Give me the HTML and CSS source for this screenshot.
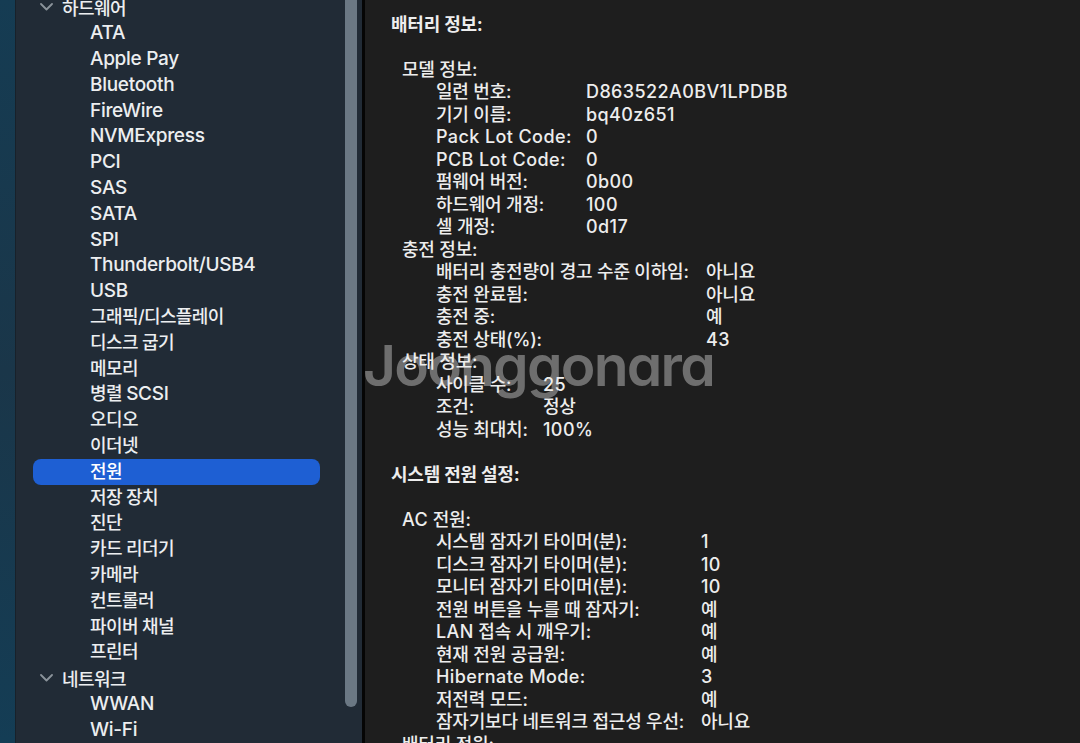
FILE: index.html
```html
<!DOCTYPE html>
<html lang="ko">
<head>
  <meta charset="UTF-8" />
  <title>시스템 정보 - 전원</title>
  <meta name="viewport" content="width=device-width, initial-scale=1.0"/>
  <link rel="stylesheet" href="styles.css">
</head>
<body>

  <div class="window">

    <!-- sidebar with the hardware tree -->
    <aside class="sidebar">
      <div class="edge"></div>
      <div class="tree">
        <div class="group-head">
          <svg class="chevron" width="13" height="8" viewBox="0 0 13 8"><polyline points="1,1 6.5,6.5 12,1" /></svg>
          <span>하드웨어</span>
        </div>
        <div class="item en">ATA</div>
        <div class="item en">Apple Pay</div>
        <div class="item en">Bluetooth</div>
        <div class="item en">FireWire</div>
        <div class="item en">NVMExpress</div>
        <div class="item en">PCI</div>
        <div class="item en">SAS</div>
        <div class="item en">SATA</div>
        <div class="item en">SPI</div>
        <div class="item en">Thunderbolt/USB4</div>
        <div class="item en">USB</div>
        <div class="item">그래픽/디스플레이</div>
        <div class="item">디스크 굽기</div>
        <div class="item">메모리</div>
        <div class="item">병렬 <span class="en">SCSI</span></div>
        <div class="item">오디오</div>
        <div class="item">이더넷</div>
        <div class="item selected">전원</div>
        <div class="item">저장 장치</div>
        <div class="item">진단</div>
        <div class="item">카드 리더기</div>
        <div class="item">카메라</div>
        <div class="item">컨트롤러</div>
        <div class="item">파이버 채널</div>
        <div class="item">프린터</div>
        <div class="group-head">
          <svg class="chevron" width="13" height="8" viewBox="0 0 13 8"><polyline points="1,1 6.5,6.5 12,1" /></svg>
          <span>네트워크</span>
        </div>
        <div class="item en">WWAN</div>
        <div class="item en">Wi-Fi</div>
      </div>
      <div class="scrollbar"></div>
    </aside>

    <div class="divider"></div>

    <!-- power report -->
    <main class="content">
      <div class="watermark">Joonggonara</div>

      <div class="report">
        <div class="head">배터리 정보:</div>
        <div class="blank"></div>

        <div class="sub">모델 정보:</div>
        <div class="rows model">
          <span>일련 번호:</span><span class="en">D863522A0BV1LPDBB</span>
          <span>기기 이름:</span><span class="en">bq40z651</span>
          <span class="en">Pack Lot Code:</span><span class="en">0</span>
          <span class="en">PCB Lot Code:</span><span class="en">0</span>
          <span>펌웨어 버전:</span><span class="en">0b00</span>
          <span>하드웨어 개정:</span><span class="en">100</span>
          <span>셀 개정:</span><span class="en">0d17</span>
        </div>

        <div class="sub">충전 정보:</div>
        <div class="rows charge">
          <span>배터리 충전량이 경고 수준 이하임:</span><span>아니요</span>
          <span>충전 완료됨:</span><span>아니요</span>
          <span>충전 중:</span><span>예</span>
          <span>충전 상태(%):</span><span class="en">43</span>
        </div>

        <div class="sub">상태 정보:</div>
        <div class="rows health">
          <span>사이클 수:</span><span class="en">25</span>
          <span>조건:</span><span>정상</span>
          <span>성능 최대치:</span><span class="en">100%</span>
        </div>

        <div class="blank"></div>
        <div class="head">시스템 전원 설정:</div>
        <div class="blank"></div>

        <div class="sub"><span class="en">AC</span> 전원:</div>
        <div class="rows ac">
          <span>시스템 잠자기 타이머(분):</span><span class="en">1</span>
          <span>디스크 잠자기 타이머(분):</span><span class="en">10</span>
          <span>모니터 잠자기 타이머(분):</span><span class="en">10</span>
          <span>전원 버튼을 누를 때 잠자기:</span><span>예</span>
          <span><span class="en">LAN</span> 접속 시 깨우기:</span><span>예</span>
          <span>현재 전원 공급원:</span><span>예</span>
          <span class="en">Hibernate Mode:</span><span class="en">3</span>
          <span>저전력 모드:</span><span>예</span>
          <span>잠자기보다 네트워크 접근성 우선:</span><span>아니요</span>
        </div>

        <div class="sub">배터리 전원:</div>
      </div>
    </main>

  </div>

</body>
</html>
```

FILE: styles.css
```css
body, html {
  margin: 0;
  padding: 0;
  height: 743px;
  overflow: hidden;
  font-family: Inter, "Noto Sans CJK KR", sans-serif;
  background-color: #1e1e1e;
}

.window {
  display: flex;
  height: 743px;
}

/* Sidebar */
.sidebar {
  position: relative;
  display: flex;
  width: 362px;
  flex-shrink: 0;
  background-color: #212b36;
  color: #eceef0;
  overflow: hidden;
}

.edge {
  width: 15px;
  flex-shrink: 0;
  background: linear-gradient(180deg, #153c53 0%, #1a3649 50%, #143d55 100%);
  border-right: 1px solid #18212a;
}

.tree {
  display: flex;
  flex-direction: column;
  margin-top: -5.5px;
  font-size: 18px;
  font-weight: 500;
  letter-spacing: -0.6px;
}

.group-head {
  display: flex;
  align-items: center;
  height: 25.8px;
  padding-left: 24px;
}

.chevron {
  margin-right: 9px;
  fill: none;
  stroke: #8b939b;
  stroke-width: 1.8;
  stroke-linecap: round;
  stroke-linejoin: round;
}

.item {
  height: 25.8px;
  line-height: 25.8px;
  width: 230px;
  margin-left: 17px;
  padding-left: 57px;
  border-radius: 8px;
  white-space: nowrap;
}

.sidebar .en {
  font-size: 19px;
  font-weight: 500;
  letter-spacing: -0.3px;
}

.item.selected {
  background-color: #1e5fd3;
  color: #ffffff;
}

.scrollbar {
  position: absolute;
  left: 345px;
  top: -6px;
  width: 12px;
  height: 713px;
  border-radius: 6px;
  background-color: #6b7884;
}

.divider {
  width: 3px;
  flex-shrink: 0;
  background-color: #050505;
}

/* Report */
.content {
  position: relative;
  flex: 1;
  overflow: hidden;
  background-color: #1e1e1e;
  color: #ededed;
}

.watermark {
  position: absolute;
  left: -2px;
  top: 337px;
  font-family: Inter, sans-serif;
  font-feature-settings: "cv11";
  font-size: 57px;
  font-weight: 600;
  line-height: 1;
  letter-spacing: -1.8px;
  color: #6e6e6e;
}

.report {
  position: relative;
  padding: 13.5px 0 0 26px;
  font-size: 18px;
  font-weight: 500;
  letter-spacing: -0.2px;
  line-height: 22.5px;
}

.report .en {
  font-weight: 500;
  letter-spacing: 0.4px;
}

.head {
  height: 22.5px;
  font-weight: bold;
}

.blank {
  height: 22.5px;
}

.sub {
  height: 22.5px;
  padding-left: 11px;
}

.rows {
  display: grid;
  grid-auto-rows: 22.5px;
  padding-left: 45px;
  white-space: nowrap;
}

.rows.model  { grid-template-columns: 150px auto; }
.rows.charge { grid-template-columns: 270px auto; }
.rows.health { grid-template-columns: 107px auto; }
.rows.ac     { grid-template-columns: 265px auto; }
```
